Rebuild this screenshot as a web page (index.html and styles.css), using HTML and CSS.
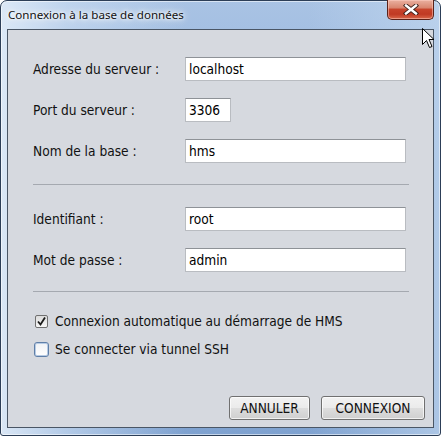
FILE: index.html
```html
<!DOCTYPE html>
<html lang="fr">
<head>
<meta charset="utf-8">
<title>Connexion à la base de données</title>
<link rel="stylesheet" href="styles.css">
</head>
<body>
<div class="window">
  <div class="titlebar">
    <span class="title">Connexion à la base de données</span>
    <div class="close" aria-label="Fermer">
      <svg width="16" height="11" viewBox="0 0 16 11">
        <path d="M3 1.5 L13 9.5 M13 1.5 L3 9.5" stroke="#3a1f1a" stroke-width="4.2" stroke-linecap="square"/>
        <path d="M3 1.5 L13 9.5 M13 1.5 L3 9.5" stroke="#ffffff" stroke-width="2.4" stroke-linecap="square"/>
      </svg>
    </div>
  </div>
  <div class="content">
    <div class="rows first">
      <label class="lbl">Adresse du serveur :</label>
      <div class="field wide">localhost</div>
      <label class="lbl">Port du serveur :</label>
      <div class="field port">3306</div>
      <label class="lbl">Nom de la base :</label>
      <div class="field wide">hms</div>
    </div>
    <div class="sep sep1"></div>
    <div class="rows second">
      <label class="lbl">Identifiant :</label>
      <div class="field wide">root</div>
      <label class="lbl">Mot de passe :</label>
      <div class="field wide">admin</div>
    </div>
    <div class="sep sep2"></div>
    <div class="checks">
      <div class="check">
        <span class="box checked">
          <svg width="11" height="11" viewBox="0 0 11 11"><path d="M2 5.5 L4.5 8.5 L9 1.5" fill="none" stroke="#1a1a1a" stroke-width="1.8"/></svg>
        </span>
        <span>Connexion automatique au démarrage de HMS</span>
      </div>
      <div class="check">
        <span class="box focus"></span>
        <span>Se connecter via tunnel SSH</span>
      </div>
    </div>
    <div class="buttons">
      <button class="btn annuler">ANNULER</button>
      <button class="btn connexion">CONNEXION</button>
    </div>
  </div>
  <svg class="cursor" width="13" height="21" viewBox="0 0 13 21">
    <path d="M0.5 0.5 L0.5 16.5 L4.5 12.5 L7.5 19.5 L10 18.5 L7 11.5 L12 11.5 Z" fill="#ffffff" stroke="#000000" stroke-width="1" stroke-linejoin="miter"/>
  </svg>
</div>
</body>
</html>
```
FILE: styles.css
```css
* { box-sizing: border-box; }
html, body { margin: 0; padding: 0; }
body { width: 441px; height: 436px; overflow: hidden; background: #fff; }

.window {
  position: relative;
  width: 441px;
  height: 436px;
  border: 1px solid #2c3e57;
  border-radius: 7px 7px 3px 3px;
  background:
    linear-gradient(90deg, rgba(222,234,247,0.95) 0%, rgba(200,219,241,0.7) 15%, rgba(120,156,200,0.0) 42%, rgba(150,185,222,0.0) 70%, rgba(196,217,240,0.65) 100%),
    linear-gradient(180deg, #a9c3e4 0%, #8fb0d9 40%, #86a8d4 75%, #7fa2d0 100%);
  padding: 0 6px 7px 6px;
  display: flex;
  flex-direction: column;
  box-shadow: inset 0 0 0 1px rgba(255,255,255,0.55);
}

.titlebar {
  height: 28px;
  display: flex;
  align-items: flex-start;
  justify-content: space-between;
  position: relative;
}
.title {
  font-family: "Noto Sans", "DejaVu Sans", sans-serif;
  font-size: 11.6px;
  color: #111;
  margin: 6px 0 0 1px;
  text-shadow: 0 0 6px #ffffff, 0 0 10px #ffffff, 0 0 3px #ffffff;
}
.close {
  width: 47px;
  height: 20px;
  margin-top: -1px;
  border: 1px solid #5a2219;
  border-top: none;
  border-radius: 0 0 5px 5px;
  background: linear-gradient(180deg, #eab0a0 0%, #d98670 40%, #c7432b 50%, #c03a24 75%, #d9684a 100%);
  box-shadow: inset 0 0 0 1px rgba(255,210,200,0.5);
  display: flex;
  align-items: center;
  justify-content: center;
}

.content {
  flex: 1;
  border: 1px solid #4a5665;
  background: #d6d9df;
  padding: 27px 26px 7px 25px;
  display: flex;
  flex-direction: column;
  font-family: "DejaVu Sans Condensed", "DejaVu Sans", sans-serif;
  font-size: 13.6px;
  color: #111;
}

.rows {
  display: grid;
  grid-template-columns: 152px 1fr;
  row-gap: 17px;
  align-items: center;
}
.lbl { line-height: 24px; }
.field {
  height: 24px;
  background: #fff;
  border: 1px solid #b9bcc1;
  border-top-color: #8e9297;
  padding: 0 3px;
  line-height: 22px;
  color: #000;
}
.field.wide { width: 221px; }
.field.port { width: 46px; }

.sep {
  height: 1px;
  background: #a5a9b0;
  margin-right: -2px;
}
.sep1 { margin-top: 21px; margin-bottom: 22px; }
.sep2 { margin-top: 19px; margin-bottom: 23px; }

.checks {
  display: flex;
  flex-direction: column;
  gap: 15px;
  padding-left: 2px;
}
.check {
  display: flex;
  align-items: center;
  gap: 7px;
  height: 13px;
  line-height: 13px;
}
.box {
  width: 13px;
  height: 13px;
  flex: none;
  border: 1px solid #8f8f8f;
  border-radius: 2px;
  background: linear-gradient(180deg, #f2f2f2 0%, #ffffff 100%);
  display: flex;
  align-items: center;
  justify-content: center;
}
.box.checked { border-color: #707070; background: linear-gradient(180deg, #dcdcdc, #f6f6f6); }
.box.focus {
  width: 15px;
  height: 15px;
  margin-left: -1px;
  margin-right: -1px;
  border: 1px solid #5f7fa8;
  border-radius: 3px;
  box-shadow: inset 0 0 0 1px #b7cbe4;
  background: linear-gradient(180deg, #f0f2f5, #ffffff);
}

.buttons {
  margin-top: auto;
  display: flex;
  justify-content: flex-end;
  gap: 11px;
  margin-right: -18px;
}
.btn {
  height: 24px;
  font-family: "DejaVu Sans Condensed", "DejaVu Sans", sans-serif;
  font-size: 13.6px;
  color: #111;
  border: 1px solid #707070;
  border-radius: 3px;
  background: linear-gradient(180deg, #f2f2f2 0%, #ebebeb 48%, #dddddd 52%, #cfcfcf 100%);
  box-shadow: inset 0 0 0 1px rgba(255,255,255,0.7);
  padding: 0;
}
.annuler { width: 81px; }
.connexion { width: 104px; }

.cursor {
  position: absolute;
  left: 421px;
  top: 27px;
}
```
